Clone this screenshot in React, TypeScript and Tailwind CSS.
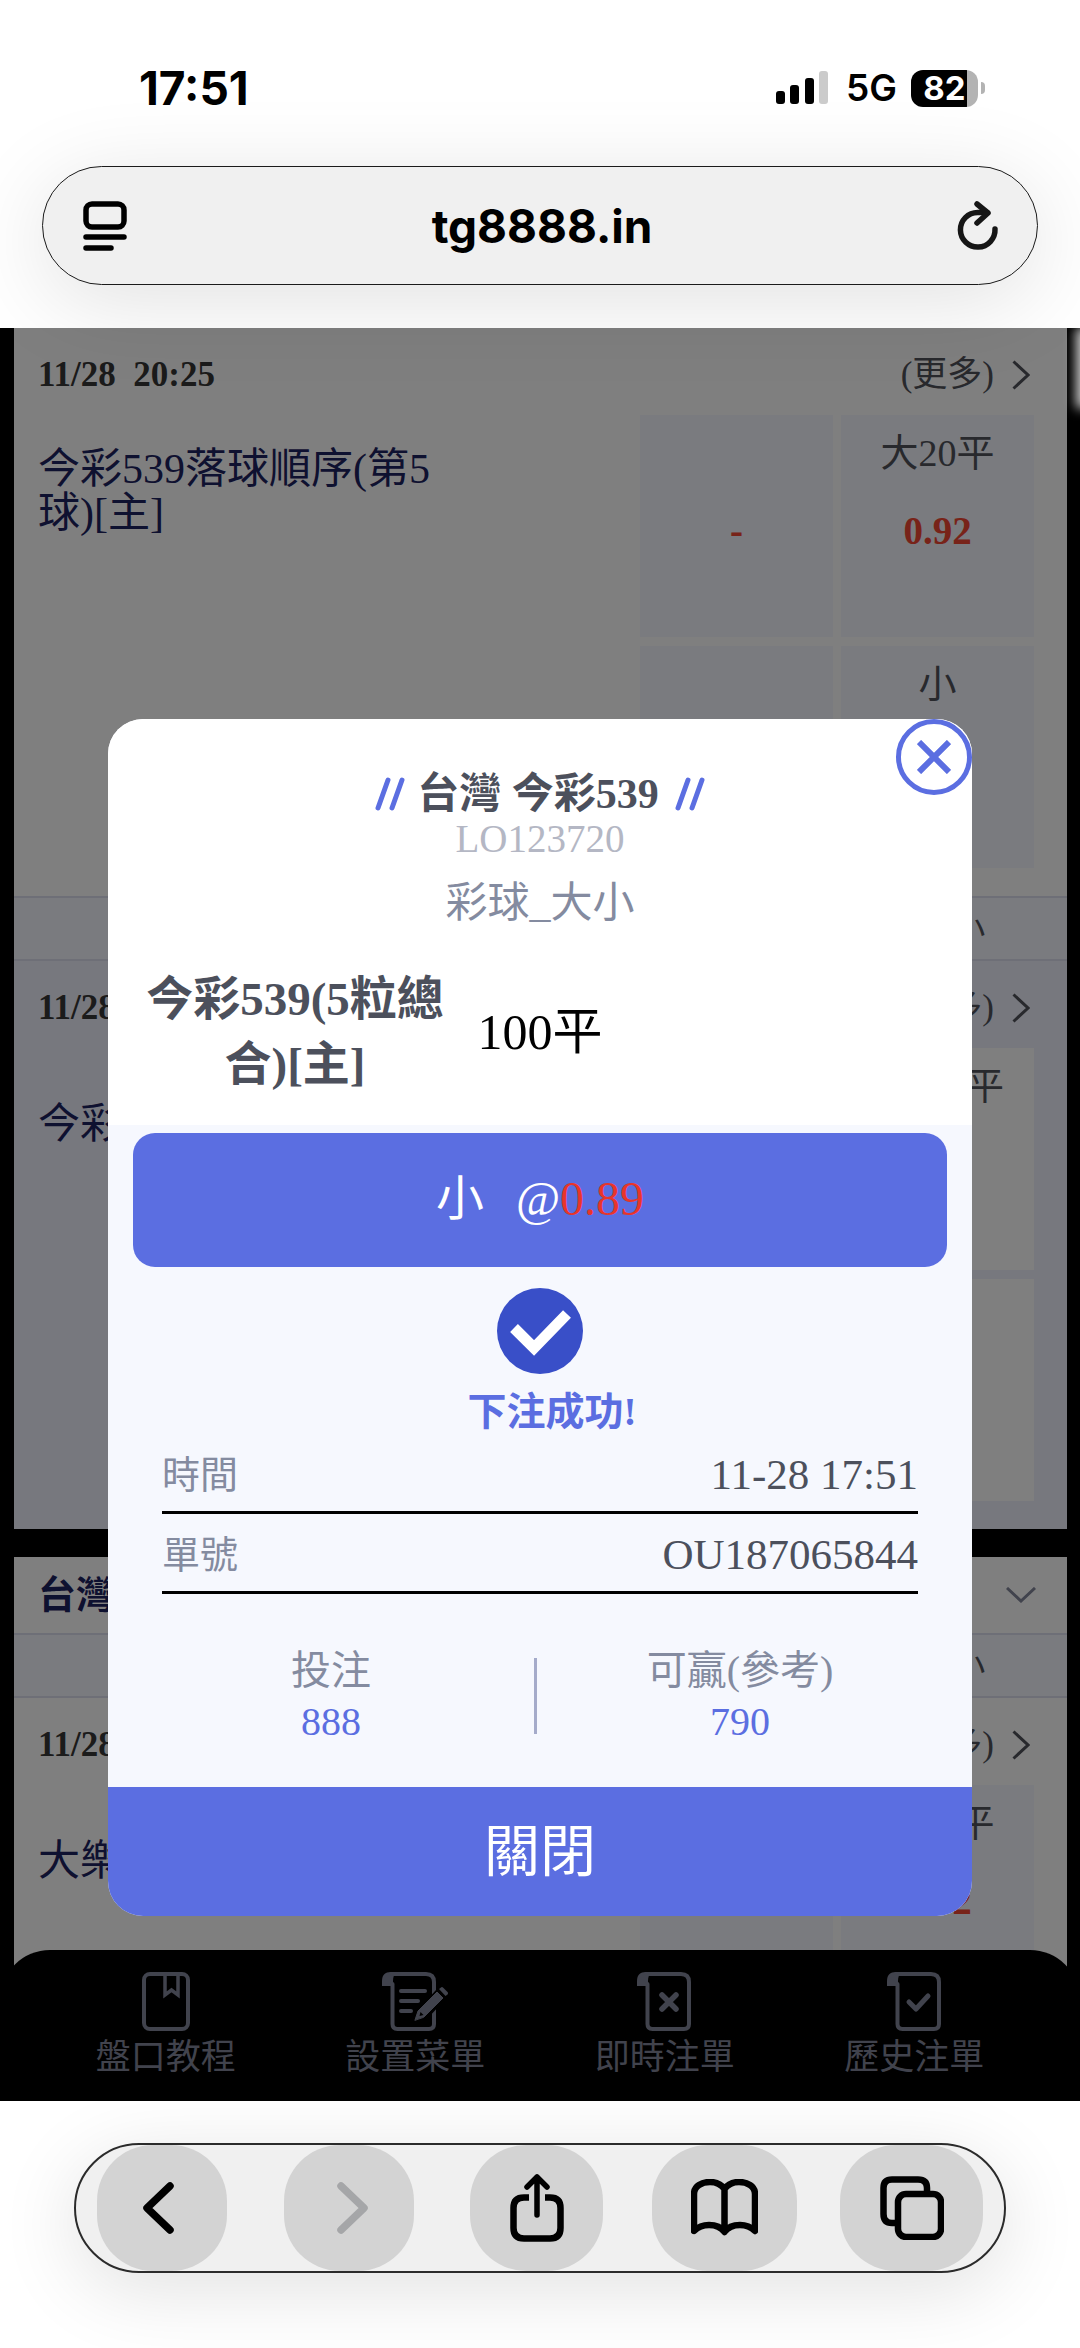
import type { ReactNode } from 'react'

interface Cell {
  label?: string
  odds?: string
}

interface Match {
  time: string
  name: string
  shaded?: boolean
  cells: Cell[]
}

const matches: Match[] = [
  {
    time: '11/28\u00a0\u00a020:25',
    name: '今彩539落球順序(第5球)[主]',
    cells: [{ odds: '-' }, { label: '大20平', odds: '0.92' }, {}, { label: '小' }],
  },
  {
    time: '11/28',
    name: '今彩539(5粒總合)[主]',
    shaded: true,
    cells: [{}, { label: '大100平' }, {}, {}],
  },
  {
    time: '11/28',
    name: '大樂透',
    cells: [{}, { label: '大25平', odds: '0.92' }, {}, {}],
  },
]

function StatusBar() {
  return (
    <div className="flex h-11 items-center justify-between pr-[95px] pl-[139px]">
      <span className="text-[46px] leading-[44px] font-bold">17:51</span>
      <div className="flex items-center">
        <svg width="52" height="34" viewBox="0 0 52 34" aria-hidden="true">
          <rect x="0" y="20" width="9" height="13" rx="3" />
          <rect x="14" y="14" width="9" height="19" rx="3" />
          <rect x="29" y="7" width="9" height="26" rx="3" />
          <rect x="43" y="0" width="9" height="33" rx="3" fill="#cbcbcb" />
        </svg>
        <span className="ml-[18px] text-[37px] leading-[44px] font-semibold">5G</span>
        <div className="ml-[14px] flex items-center gap-[3px]">
          <div className="flex h-[37px] w-[67px] items-center justify-center rounded-[12px] bg-linear-to-r from-black from-84% to-[#b3b3b3] to-84% text-[33px] leading-[37px] font-bold text-white">
            82
          </div>
          <div className="h-3 w-1 rounded-r-full bg-[#b3b3b3]" />
        </div>
      </div>
    </div>
  )
}

function AddressBar() {
  return (
    <div className="mx-[42px] mt-14 mb-[43px] flex h-[119px] items-center justify-between rounded-full border border-[#1b1b1b] bg-[#f0f0f0] pr-[38px] pl-10 shadow-[0_16px_90px_rgba(0,0,0,0.12)]">
      <button type="button" aria-label="頁面選單">
        <svg width="44" height="50" viewBox="0 0 44 50" fill="none" stroke="black" strokeWidth="5.5" strokeLinecap="round">
          <rect x="3" y="3" width="38" height="23" rx="6" />
          <path d="M3 36H41M3 47H28" />
        </svg>
      </button>
      <input
        type="text"
        aria-label="網址"
        defaultValue="tg8888.in"
        className="h-14 min-w-0 flex-1 bg-transparent text-center text-[46px] leading-[56px] font-bold outline-none"
      />
      <button type="button" aria-label="重新整理">
        <svg width="42" height="50" viewBox="0 0 42 50" fill="none" stroke="#161616" strokeWidth="5.5" strokeLinecap="round" strokeLinejoin="round">
          <path d="M38 28A17.300 17.300 0 1 1 20.700 11.500H30" />
          <path d="M20 3L31 12L20 22" />
        </svg>
      </button>
    </div>
  )
}

function ChevronRight() {
  return (
    <svg width="18" height="30" viewBox="0 0 18 30" fill="none" stroke="#50525a" strokeWidth="3" aria-hidden="true">
      <path d="M1.500 1.500L16 15L1.500 28.500" />
    </svg>
  )
}

function MarketBand() {
  return (
    <div className="flex h-[65px] items-center justify-end border-y-2 border-[#dddfee] bg-[#f4f6fe] pr-[33px]">
      <span className="w-[192px] text-center text-[34px] leading-[44px] text-[#50525a]">大 / 小</span>
    </div>
  )
}

function MatchRow({ match }: { match: Match }) {
  return (
    <section className={match.shaded ? 'bg-[#eef0fc] pb-7' : 'bg-white pb-7'}>
      <div className="flex items-center justify-between pt-7 pr-[37px] pb-[21px] pl-6 leading-[38px]">
        <time className="text-[35px] font-bold text-[#363636]">{match.time}</time>
        <a href="#more" className="flex items-center gap-[18px] text-[35px] text-[#50525a]">
          (更多)
          <ChevronRight />
        </a>
      </div>
      <div className="flex items-start justify-between pr-[33px] pl-6">
        <h3 className="flex h-[152px] w-[410px] items-center text-[42px] leading-[44px] text-[#1d2260]">
          {match.name}
        </h3>
        <div className="grid w-[394px] grid-cols-2 gap-x-2 gap-y-[9px]">
          {match.cells.map((cell, i) => (
            <button
              key={i}
              type="button"
              aria-label={cell.label ?? '未開盤'}
              className={
                match.shaded
                  ? 'flex h-[222px] flex-col items-center gap-[34px] bg-white pt-4'
                  : 'flex h-[222px] flex-col items-center gap-[34px] bg-[#f4f6fe] pt-4'
              }
            >
              <span className="h-11 text-[38px] leading-[44px] text-[#50525a]">{cell.label}</span>
              <span className="h-11 text-[39px] leading-[44px] font-bold text-[#f04632]">{cell.odds}</span>
            </button>
          ))}
        </div>
      </div>
    </section>
  )
}

function ScrollIcon({ width = 55, children }: { width?: number; children: ReactNode }) {
  return (
    <svg width={width} height="60" viewBox={`0 0 ${width} 60`} fill="none" stroke="#82869a" strokeWidth="4" strokeLinecap="round" strokeLinejoin="round" aria-hidden="true">
      <path d="M0 14V9C0 3 3 0 9 0H15C12 2 11 5 11 9V14Z" fill="#82869a" stroke="none" />
      <path d="M10.500 12V52Q10.500 57 15.500 57H47Q52 57 52 52V10Q52 2 44 2H9" />
      {children}
    </svg>
  )
}

const tabs = [
  {
    label: '盤口教程',
    icon: (
      <svg width="48" height="60" viewBox="0 0 48 60" fill="none" stroke="#82869a" strokeWidth="4" aria-hidden="true">
        <rect x="2" y="2" width="44" height="55" rx="6" />
        <path d="M23 3V23L29.500 18L36 23V3" strokeWidth="3.500" />
      </svg>
    ),
  },
  {
    label: '設置菜單',
    icon: (
      <ScrollIcon width={66}>
        <path d="M19 19H43M19 29H36M19 39H29" />
        <path d="M39 44L62 19" stroke="black" strokeWidth="13" strokeLinecap="butt" />
        <path d="M33 48L36 39L55 20L61 26L42 45Z" fill="#82869a" stroke="#82869a" strokeWidth="1" />
        <path d="M57 17L59 15.500Q60 14.500 61.500 16L65.500 20Q66.500 21 65.500 22.500L63.500 24Z" fill="#82869a" stroke="none" />
        <path d="M37.500 44L38.500 40L41.500 43Z" fill="black" stroke="none" />
      </ScrollIcon>
    ),
  },
  {
    label: '即時注單',
    icon: (
      <ScrollIcon>
        <path d="M25 23L39 37M39 23L25 37" strokeWidth="5.5" />
      </ScrollIcon>
    ),
  },
  {
    label: '歷史注單',
    icon: (
      <ScrollIcon>
        <path d="M22 30L29 37L41 24" strokeWidth="5" />
      </ScrollIcon>
    ),
  },
]

function TabBar() {
  return (
    <nav className="absolute inset-x-0 bottom-0 flex h-[151px] justify-around rounded-t-[50px] bg-black px-[41px] pt-[22px]">
      {tabs.map((t) => (
        <a key={t.label} href="#tab" className="flex flex-1 flex-col items-center gap-1 text-[35px] leading-[44px] text-[#82869a]">
          {t.icon}
          {t.label}
        </a>
      ))}
    </nav>
  )
}

function Slashes() {
  return (
    <svg width="30" height="34" viewBox="0 0 30 34" fill="none" stroke="#5b6ee1" strokeWidth="5" strokeLinecap="round" aria-hidden="true">
      <path d="M3 31L13 3M17 31L27 3" />
    </svg>
  )
}

function SlipRow({ label, value }: { label: string; value: string }) {
  return (
    <div className="flex h-20 items-center justify-between border-b-3 border-black pt-1">
      <dt className="text-[38px] leading-[44px] text-[#848ba0]">{label}</dt>
      <dd className="text-[43px] leading-[44px] text-[#4c505c]">{value}</dd>
    </div>
  )
}

function Amount({ label, value }: { label: string; value: string }) {
  return (
    <div className="flex flex-1 flex-col items-center">
      <dt className="text-[40px] leading-[52px] text-[#848ba0]">{label}</dt>
      <dd className="text-[40px] leading-[50px] text-[#5b6ee1]">{value}</dd>
    </div>
  )
}

function BetDialog() {
  return (
    <div role="dialog" aria-label="下注成功" className="relative w-4/5 overflow-hidden rounded-[35px] bg-[#f6f8fe]">
      <button
        type="button"
        aria-label="關閉視窗"
        className="absolute top-0 right-0 flex size-[76px] items-center justify-center rounded-full border-5 border-[#5b6ee1]"
      >
        <svg width="34" height="34" viewBox="0 0 34 34" stroke="#5b6ee1" strokeWidth="6">
          <path d="M2 2L32 32M32 2L2 32" />
        </svg>
      </button>

      <header className="flex flex-col items-center bg-white px-[25px] pt-[52px] pb-7">
        <h2 className="flex items-center gap-3 text-[42px] leading-[46px] font-bold text-[#4c505c]">
          <Slashes />
          <span className="pr-1">台灣 今彩539</span>
          <Slashes />
        </h2>
        <p className="text-[39px] leading-[44px] text-[#b4b7c4]">LO123720</p>
        <p className="mt-4 text-[42px] leading-[52px] text-[#848ba0]">彩球_大小</p>
        <div className="mt-[38px] grid w-full grid-cols-[324px_1fr_324px] items-center text-center">
          <strong className="px-2 text-[47px] leading-[65px] text-[#4c505c]">今彩539(5粒總合)[主]</strong>
          <span className="text-[50px] leading-[65px]">100平</span>
        </div>
      </header>

      <div className="mx-[25px] mt-2 flex h-[134px] items-center justify-center rounded-[22px] bg-[#5b6ee1] pb-[3px] text-[48px] leading-[56px] text-white">
        <span className="mr-8">小</span>@<span className="text-[#e8352b]">0.89</span>
      </div>

      <div className="mt-[21px] flex flex-col items-center">
        <svg width="86" height="86" viewBox="0 0 86 86" aria-hidden="true">
          <circle cx="43" cy="43" r="43" fill="#394fc8" />
          <path d="M17 40L37 60L70 26" fill="none" stroke="white" strokeWidth="11" />
        </svg>
        <p className="mt-4 pl-6 text-[39px] leading-[44px] font-bold text-[#5b6ee1]">下注成功!</p>
      </div>

      <dl className="mx-[54px]">
        <SlipRow label="時間" value="11-28 17:51" />
        <SlipRow label="單號" value="OU187065844" />
      </dl>

      <dl className="mt-[51px] mr-[29px] mb-10 ml-5 flex items-center">
        <Amount label="投注" value="888" />
        <div className="h-[76px] w-[3px] bg-[#a5abca]" />
        <Amount label="可贏(參考)" value="790" />
      </dl>

      <button type="button" className="flex h-[129px] w-full items-center justify-center bg-[#5b6ee1] text-[56px] leading-[64px] text-white">
        關閉
      </button>
    </div>
  )
}

function ToolbarSlot({ children }: { children: ReactNode }) {
  return <div className="flex w-[145px] justify-center">{children}</div>
}

function BrowserToolbar() {
  return (
    <div className="relative bg-white pt-[42px] pb-[75px]">
      <div className="mx-[74px] flex h-[130px] justify-between rounded-full border-2 border-[#2b2b2b] bg-[#f0f0f0] pr-5 pl-[13px] shadow-[0_16px_80px_rgba(0,0,0,0.12)]">
        <ToolbarSlot>
          <button type="button" aria-label="上一頁" className="flex w-[130px] items-center justify-center rounded-[56px] bg-[#d3d3d3]">
            <svg width="32" height="52" viewBox="0 0 32 52" fill="none" stroke="black" strokeWidth="7.5" strokeLinecap="round" strokeLinejoin="round" className="-ml-2">
              <path d="M28 4L5 26L28 48" />
            </svg>
          </button>
        </ToolbarSlot>
        <ToolbarSlot>
          <button type="button" aria-label="下一頁" className="flex w-[130px] items-center justify-center rounded-[56px] bg-[#d3d3d3]">
            <svg width="32" height="52" viewBox="0 0 32 52" fill="none" stroke="#a5a6a8" strokeWidth="7.5" strokeLinecap="round" strokeLinejoin="round" className="ml-2">
              <path d="M4 4L27 26L4 48" />
            </svg>
          </button>
        </ToolbarSlot>
        <ToolbarSlot>
          <button type="button" aria-label="分享" className="flex w-[133px] items-center justify-center rounded-[56px] bg-[#d3d3d3]">
            <svg width="54" height="68" viewBox="0 0 54 68" fill="none" stroke="black" strokeWidth="6.5" strokeLinecap="round" strokeLinejoin="round">
              <path d="M19 23.500H14Q3.500 23.500 3.500 34V54Q3.500 64.500 14 64.500H40Q50.500 64.500 50.500 54V34Q50.500 23.500 40 23.500H35" strokeLinecap="butt" />
              <path d="M27 41V3M17 13L27 3L37 13" strokeWidth="5.5" />
            </svg>
          </button>
        </ToolbarSlot>
        <ToolbarSlot>
          <button type="button" aria-label="書籤" className="flex w-[145px] items-center justify-center rounded-[56px] bg-[#d3d3d3]">
            <svg width="67" height="58" viewBox="0 0 67 58" fill="none" stroke="black" strokeWidth="6.5" strokeLinecap="round" strokeLinejoin="round">
              <path d="M33.500 10C30 5 25 3 19 3C11 3 3 7 3 15V52C7 48 12 46 18 46C24 46 30 48 33.500 53C37 48 43 46 49 46C55 46 60 48 64 52V15C64 7 56 3 48 3C42 3 37 5 33.500 10V52" />
            </svg>
          </button>
        </ToolbarSlot>
        <ToolbarSlot>
          <button type="button" aria-label="分頁" className="flex w-[143px] items-center justify-center rounded-[56px] bg-[#d3d3d3]">
            <svg width="64" height="64" viewBox="0 0 64 64" fill="none" stroke="black" strokeWidth="6.5">
              <rect x="18" y="18" width="43" height="43" rx="8" />
              <path d="M17 47H12Q3.500 47 3.500 38V12Q3.500 3.500 12 3.500H38Q47 3.500 47 12V17" />
            </svg>
          </button>
        </ToolbarSlot>
      </div>
    </div>
  )
}

export default function App() {
  return (
    <div className="flex h-screen flex-col overflow-hidden bg-white font-['Inter','Noto_Sans_CJK_TC',sans-serif] text-black">
      <header className="relative z-10 pt-[66px]">
        <StatusBar />
        <AddressBar />
      </header>

      <main className="relative min-h-0 flex-1 overflow-hidden bg-black font-['Liberation_Serif','Noto_Sans_CJK_TC',serif]">
        <div className="mr-[13px] ml-[14px]">
          <MatchRow match={matches[0]} />
          <MarketBand />
          <MatchRow match={matches[1]} />
          <div className="mt-7 flex h-[76px] items-center justify-between bg-white pr-[31px] pl-6">
            <h2 className="text-[38px] leading-[44px] font-bold text-[#1d2260]">台灣 大樂透</h2>
            <svg width="30" height="16" viewBox="0 0 30 16" fill="none" stroke="#82869a" strokeWidth="3" aria-hidden="true">
              <path d="M1 1L15 14L29 1" />
            </svg>
          </div>
          <MarketBand />
          <MatchRow match={matches[2]} />
        </div>
        <TabBar />

        <div className="absolute inset-0 flex items-start justify-center bg-black/50 pt-[391px]">
          <BetDialog />
        </div>
        <div className="absolute top-0 -right-5 h-20 w-6 bg-white/80 blur-[6px]" />
      </main>

      <BrowserToolbar />
    </div>
  )
}
